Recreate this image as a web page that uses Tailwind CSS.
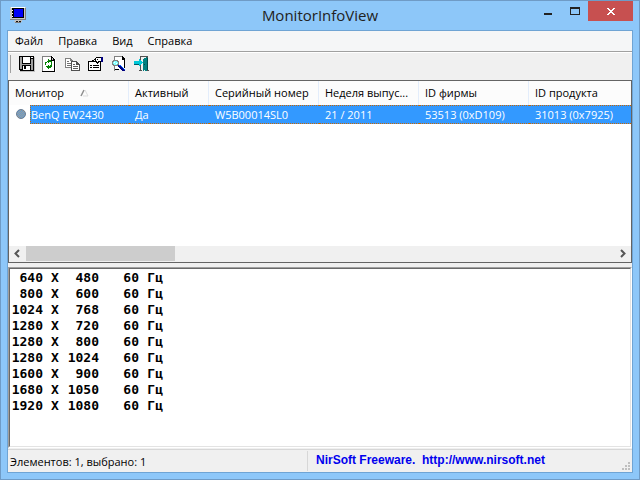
<!DOCTYPE html>
<html lang="ru">
<head>
<meta charset="utf-8">
<title>MonitorInfoView</title>
<script src="https://cdn.jsdelivr.net/npm/@tailwindcss/browser@4"></script>
</head>
<body class="h-screen overflow-hidden">
<div class="flex h-full flex-col border border-[#6f9bc6] bg-[#8dc7f9] px-1.5 pb-1.5 font-['Open_Sans','Noto_Sans',sans-serif] text-[11px] text-black">
  <header class="flex h-[29px] shrink-0 items-start">
    <svg class="mt-1.5 ml-[3px] size-4 shrink-0" viewBox="0 0 16 16" shape-rendering="crispEdges" aria-hidden="true">
      <path fill="#c8c8c8" d="M0 0h16v13H0z"/><path fill="#fff" d="M1 0h14v1H1z"/><path fill="#808080" d="M15 1h1v12H0v-1h15z"/>
      <path fill="#000" d="M2 1h12v10H2z"/><path fill="#0000f8" d="M4 2h9v8H4z"/><path fill="#fff" d="M2 3h1v1H2zM2 6h1v1H2zM2 9h1v1H2z"/>
      <path fill="#c0c0c0" d="M5 13h7v1H5zM4 14h8v1H4z"/><path fill="#111" d="M6 14h2v1H6zM9 14h2v1H9z"/><path fill="#808080" d="M5 15h6v1H5z"/>
    </svg>
    <h1 class="flex-1 pt-1 pl-20 text-center text-[15px] leading-5 text-[#222]">MonitorInfoView</h1>
    <div class="flex shrink-0">
      <button type="button" aria-label="Свернуть" class="h-5 w-[27px]"><svg class="h-5 w-[27px]" viewBox="0 0 27 20" shape-rendering="crispEdges"><path fill="#222" d="M10 12h8v2h-8z"/></svg></button>
      <button type="button" aria-label="Развернуть" class="h-5 w-[27px]"><svg class="h-5 w-[27px]" viewBox="0 0 27 20" shape-rendering="crispEdges"><path fill="#222" fill-rule="evenodd" d="M9 6h10v8H9zM10 8v5h8V8z"/></svg></button>
      <button type="button" aria-label="Закрыть" class="h-5 w-[45px] bg-[#c75050]"><svg class="h-5 w-[45px]" viewBox="0 0 45 20" shape-rendering="crispEdges"><path fill="#fff" d="M19 7h2v1h1v1h2V8h1V7h2v1h-1v1h-1v1h-1v1h1v1h1v1h1v1h-2v-1h-1v-1h-2v1h-1v1h-2v-1h1v-1h1v-1h1v-1h-1V9h-1V8h-1z"/></svg></button>
    </div>
  </header>

  <main class="flex min-h-0 flex-1 flex-col border border-[#6fa4d4] bg-[#f0f0f0]">
    <nav class="flex h-[21px] shrink-0 items-start gap-px border-b border-[#a0a0a0] bg-[#f5f6f7]">
      <button type="button" class="h-5 px-[7px]">Файл</button>
      <button type="button" class="h-5 px-[7px]">Правка</button>
      <button type="button" class="h-5 px-[7px]">Вид</button>
      <button type="button" class="h-5 px-[7px]">Справка</button>
    </nav>
    <div role="toolbar" aria-label="Панель инструментов" class="flex h-7 shrink-0 items-start border-t border-white pt-0.5 pl-0.5">
      <div class="mr-2 h-[18px] w-px bg-[#a0a0a0]"></div>
      <button type="button" aria-label="Сохранить" class="flex h-[18px] w-[23px] items-center"><svg class="size-4" viewBox="0 0 16 16" shape-rendering="crispEdges"><path fill="#c0c0c0" d="M1 1h15v15H1z"/><path fill="#000" d="M0 0h15v15H1v-1H0z"/><path fill="#a0a0a0" d="M1 1h2v12H1zM12 3h2v11h-2zM3 8h9v1H3z"/><path fill="#fff" d="M4 1h7v6H4zM12 1h2v1h-2z"/><path fill="#fff" d="M4 10h7v4H4z"/><path fill="#000" d="M5 10h2v3H5zM3 1h1v7H3zM11 1h1v7h-1zM3 7h9v1H3zM3 9h9v1H3z"/></svg></button>
      <button type="button" aria-label="Обновить" class="flex h-[18px] w-[23px] items-center"><svg class="size-4" viewBox="0 0 16 16" shape-rendering="crispEdges"><path fill="#fff" d="M1 0h9l4 4v12H1z"/><path fill="#808080" d="M0 0h10v1H1v14H0z"/><path fill="#000" d="M9 0h1v1h1v1h1v1h1v13H0v-1h12V5H9z"/><path fill="#c0c0c0" d="M10 2h1v2h-1z"/><path fill="#008000" d="M6 3h1v1h2v1h1v3H9V6H7v1H6V6H5V5h1zM3 6h2v1H4v2H3zM9 8h1v3H9v1H7v1H6v-1H5v-1H4v-1h2V9h1v1h1V9h1z"/></svg></button>
      <button type="button" aria-label="Копировать" class="flex h-[18px] w-[23px] items-center"><svg class="size-4" viewBox="0 0 16 16" shape-rendering="crispEdges"><path fill="#808080" d="M0 2h6v1h1v1h1v8H0z"/><path fill="#fff" d="M1 3h4v2h2v6H1z"/><path fill="#707070" d="M2 5h2v1H2zM2 7h4v1H2zM2 9h4v1H2z"/><path fill="#505050" d="M6 5h6v1h1v1h1v1h1v7H6z"/><path fill="#fff" d="M7 6h4v3h3v5H7z"/><path fill="#606060" d="M8 8h2v1H8zM8 10h5v1H8zM8 12h5v1H8z"/></svg></button>
      <button type="button" aria-label="Свойства" class="flex h-[18px] w-6 items-center"><svg class="size-4" viewBox="0 0 16 16" shape-rendering="crispEdges"><path fill="#000" d="M0 5h13v10H0z"/><path fill="#fff" d="M1 6h11v8H1z"/><path fill="#000" d="M2 9h2v1H2zM5 9h6v1H5zM2 11h2v1H2zM5 11h6v1H5zM8 1h5v1h1v4h-3v1h-1v1H9V7H8V6H6V5H4V4h2V3h1V2h1z"/><path fill="#fff" d="M8 2h5v3h-3v1H9V5H6V4h2z"/><path fill="#000" d="M9 3h1v1H9zM7 4h1v1H7z"/><path fill="#000080" d="M13 1h2v5h-2z"/></svg></button>
      <button type="button" aria-label="Найти" class="flex h-[18px] w-[22px] items-center"><svg class="size-4" viewBox="0 0 16 16" shape-rendering="crispEdges"><path fill="#808080" d="M2 0h8v1H3v14H2z"/><path fill="#fff" d="M3 1h7v3h3v9H3z"/><path fill="#000" d="M10 0h1v1h1v1h1v10h-1V4h-2zM3 13h4v1H3z"/><path fill="#808080" d="M1 4h5v1h1v4H6v1H1V9H0V5h1z"/><path fill="#80ffff" d="M2 5h3v1h1v2H5v1H2V8H1V6h1z"/><path fill="#fff" d="M2 6h1v1H2zM4 7h1v1H4z"/><path fill="#000080" d="M6 9h2v1h1v1h1v1h1v1h1v1h1v1h-3v-1H9v-1H8v-1H7v-1H6z"/><path fill="#0060ff" d="M7 9h2v1h1v1h1v1h1v1h1v1h-1v-1h-1v-1h-1v-1H9v-1H7z"/></svg></button>
      <button type="button" aria-label="Выход" class="flex h-[18px] w-[23px] items-center"><svg class="size-4" viewBox="0 0 16 16" shape-rendering="crispEdges"><path fill="#505050" d="M6 0h8v14h1v1h-3V1H7v13h1v1H5v-1h1z"/><path fill="#f0f0f0" d="M7 1h3v13H7z"/><path fill="#008080" d="M9 3h1V2h2V1h1v14h-2v-1h-1v1H9z"/><path fill="#004848" d="M13 2h1v12h-1zM10 8h1v1h-1z"/><path fill="#00c8d8" d="M0 5h5V3h1v1h1v1h1v1h1v1H8v1H7v1H6v1H5V8H0z"/><path fill="#005868" d="M0 8h5v1H0z"/></svg></button>
    </div>

    <section aria-label="Мониторы" class="flex h-[183px] shrink-0 flex-col border border-[#646464] bg-white">
      <div class="min-h-0 flex-1 overflow-hidden">
        <table class="w-full table-fixed border-separate border-spacing-0 text-left whitespace-nowrap">
          <colgroup><col class="w-[120px]"><col class="w-20"><col class="w-[110px]"><col class="w-[100px]"><col class="w-[110px]"><col></colgroup>
          <thead>
            <tr class="h-6 bg-[#fcfcfc]">
              <th class="border-r border-[#e3edfb] py-0 pl-1.5 font-normal" aria-sort="ascending"><div class="flex items-center gap-4">Монитор<svg class="h-2 w-2.5" viewBox="0 0 10 8" aria-hidden="true"><path d="M1 7L4 1" stroke="#909090" stroke-width="1.5"/><path d="M5 1l3 6H3" fill="none" stroke="#ddd"/></svg></div></th>
              <th class="border-r border-[#e3edfb] py-0 pl-1.5 font-normal">Активный</th>
              <th class="border-r border-[#e3edfb] py-0 pl-1.5 font-normal">Серийный номер</th>
              <th class="border-r border-[#e3edfb] py-0 pl-1.5 font-normal">Неделя выпус...</th>
              <th class="border-r border-[#e3edfb] py-0 pl-1.5 font-normal">ID фирмы</th>
              <th class="py-0 pl-1.5 font-normal">ID продукта</th>
            </tr>
          </thead>
          <tbody>
            <tr class="h-[19px] text-white">
              <td class="p-0"><div class="flex h-[19px]"><svg class="mt-1 mr-1 ml-[7px] size-2.5 shrink-0" viewBox="0 0 10 10" aria-hidden="true"><defs><pattern id="dots" width="2" height="2" patternUnits="userSpaceOnUse"><path fill="#a8a090" d="M0 0h2v2H0z"/><path fill="#5599dd" d="M0 0h1v1H0zM1 1h1v1H1z"/></pattern></defs><circle cx="5" cy="5" r="4.5" fill="url(#dots)" stroke="#6c7f94"/></svg><span class="h-full flex-1 border border-r-0 border-dotted border-[#cc6600] bg-[#3399ff] leading-[17px]">BenQ EW2430</span></div></td>
              <td class="border-y border-dotted border-[#cc6600] bg-[#3399ff] py-0 pl-1.5 leading-[17px]">Да</td>
              <td class="border-y border-dotted border-[#cc6600] bg-[#3399ff] py-0 pl-1.5 leading-[17px]">W5B00014SL0</td>
              <td class="border-y border-dotted border-[#cc6600] bg-[#3399ff] py-0 pl-1.5 leading-[17px]">21 / 2011</td>
              <td class="border-y border-dotted border-[#cc6600] bg-[#3399ff] py-0 pl-1.5 leading-[17px]">53513 (0xD109)</td>
              <td class="border-y border-dotted border-[#cc6600] bg-[#3399ff] py-0 pl-1.5 leading-[17px]">31013 (0x7925)</td>
            </tr>
          </tbody>
        </table>
      </div>
      <div class="flex h-4 shrink-0 bg-[#f0f0f0]">
        <button type="button" aria-label="Влево" class="h-4 w-[17px]"><svg class="h-4 w-[17px]" viewBox="0 0 17 16"><path d="M10 4L6.500 7.500L10 11" fill="none" stroke="#555" stroke-width="2"/></svg></button>
        <div class="flex-1 pb-px"><div class="h-full w-[149px] bg-[#cdcdcd]"></div></div>
        <button type="button" aria-label="Вправо" class="h-4 w-[17px]"><svg class="h-4 w-[17px]" viewBox="0 0 17 16"><path d="M7 4l3.500 3.500L7 11" fill="none" stroke="#555" stroke-width="2"/></svg></button>
      </div>
    </section>

    <section aria-label="Режимы" class="mt-1 min-h-0 flex-1 border border-t-[#a0a0a0] border-r-white border-b-white border-l-[#a0a0a0]">
      <div class="h-full overflow-hidden border border-t-[#696969] border-r-[#e3e3e3] border-b-[#e3e3e3] border-l-[#696969] bg-white pt-px pl-px">
        <table class="border-collapse text-right font-['DejaVu_Sans_Mono',monospace] text-[13px] leading-4 font-bold">
          <colgroup><col class="w-8"><col class="w-6"><col class="w-8"><col class="w-10"><col class="w-6"></colgroup>
          <tbody>
            <tr><td>640</td><td class="text-center">X</td><td>480</td><td>60</td><td class="pl-2">Гц</td></tr>
            <tr><td>800</td><td class="text-center">X</td><td>600</td><td>60</td><td class="pl-2">Гц</td></tr>
            <tr><td>1024</td><td class="text-center">X</td><td>768</td><td>60</td><td class="pl-2">Гц</td></tr>
            <tr><td>1280</td><td class="text-center">X</td><td>720</td><td>60</td><td class="pl-2">Гц</td></tr>
            <tr><td>1280</td><td class="text-center">X</td><td>800</td><td>60</td><td class="pl-2">Гц</td></tr>
            <tr><td>1280</td><td class="text-center">X</td><td>1024</td><td>60</td><td class="pl-2">Гц</td></tr>
            <tr><td>1600</td><td class="text-center">X</td><td>900</td><td>60</td><td class="pl-2">Гц</td></tr>
            <tr><td>1680</td><td class="text-center">X</td><td>1050</td><td>60</td><td class="pl-2">Гц</td></tr>
            <tr><td>1920</td><td class="text-center">X</td><td>1080</td><td>60</td><td class="pl-2">Гц</td></tr>
          </tbody>
        </table>
      </div>
    </section>

    <footer class="mt-px flex h-[23px] shrink-0 border-t border-[#d7d7d7]">
      <div class="my-px w-[300px] border-r border-[#d7d7d7] pl-0.5 leading-[22px]">Элементов: 1, выбрано: 1</div>
      <div class="flex flex-1 items-start pt-0.5 pl-2 font-['Liberation_Sans',sans-serif] text-xs leading-4 font-bold text-[#0000ee]"><a href="http://www.nirsoft.net" class="whitespace-pre">NirSoft Freeware.  http://www.nirsoft.net</a></div>
      <svg class="mr-0.5 mb-0.5 size-2 self-end" viewBox="0 0 8 8" shape-rendering="crispEdges" aria-hidden="true"><path fill="#bfbfbf" d="M6 0h2v2H6zM3 3h2v2H3zM6 3h2v2H6zM0 6h2v2H0zM3 6h2v2H3zM6 6h2v2H6z"/></svg>
    </footer>
  </main>
</div>
</body>
</html>
